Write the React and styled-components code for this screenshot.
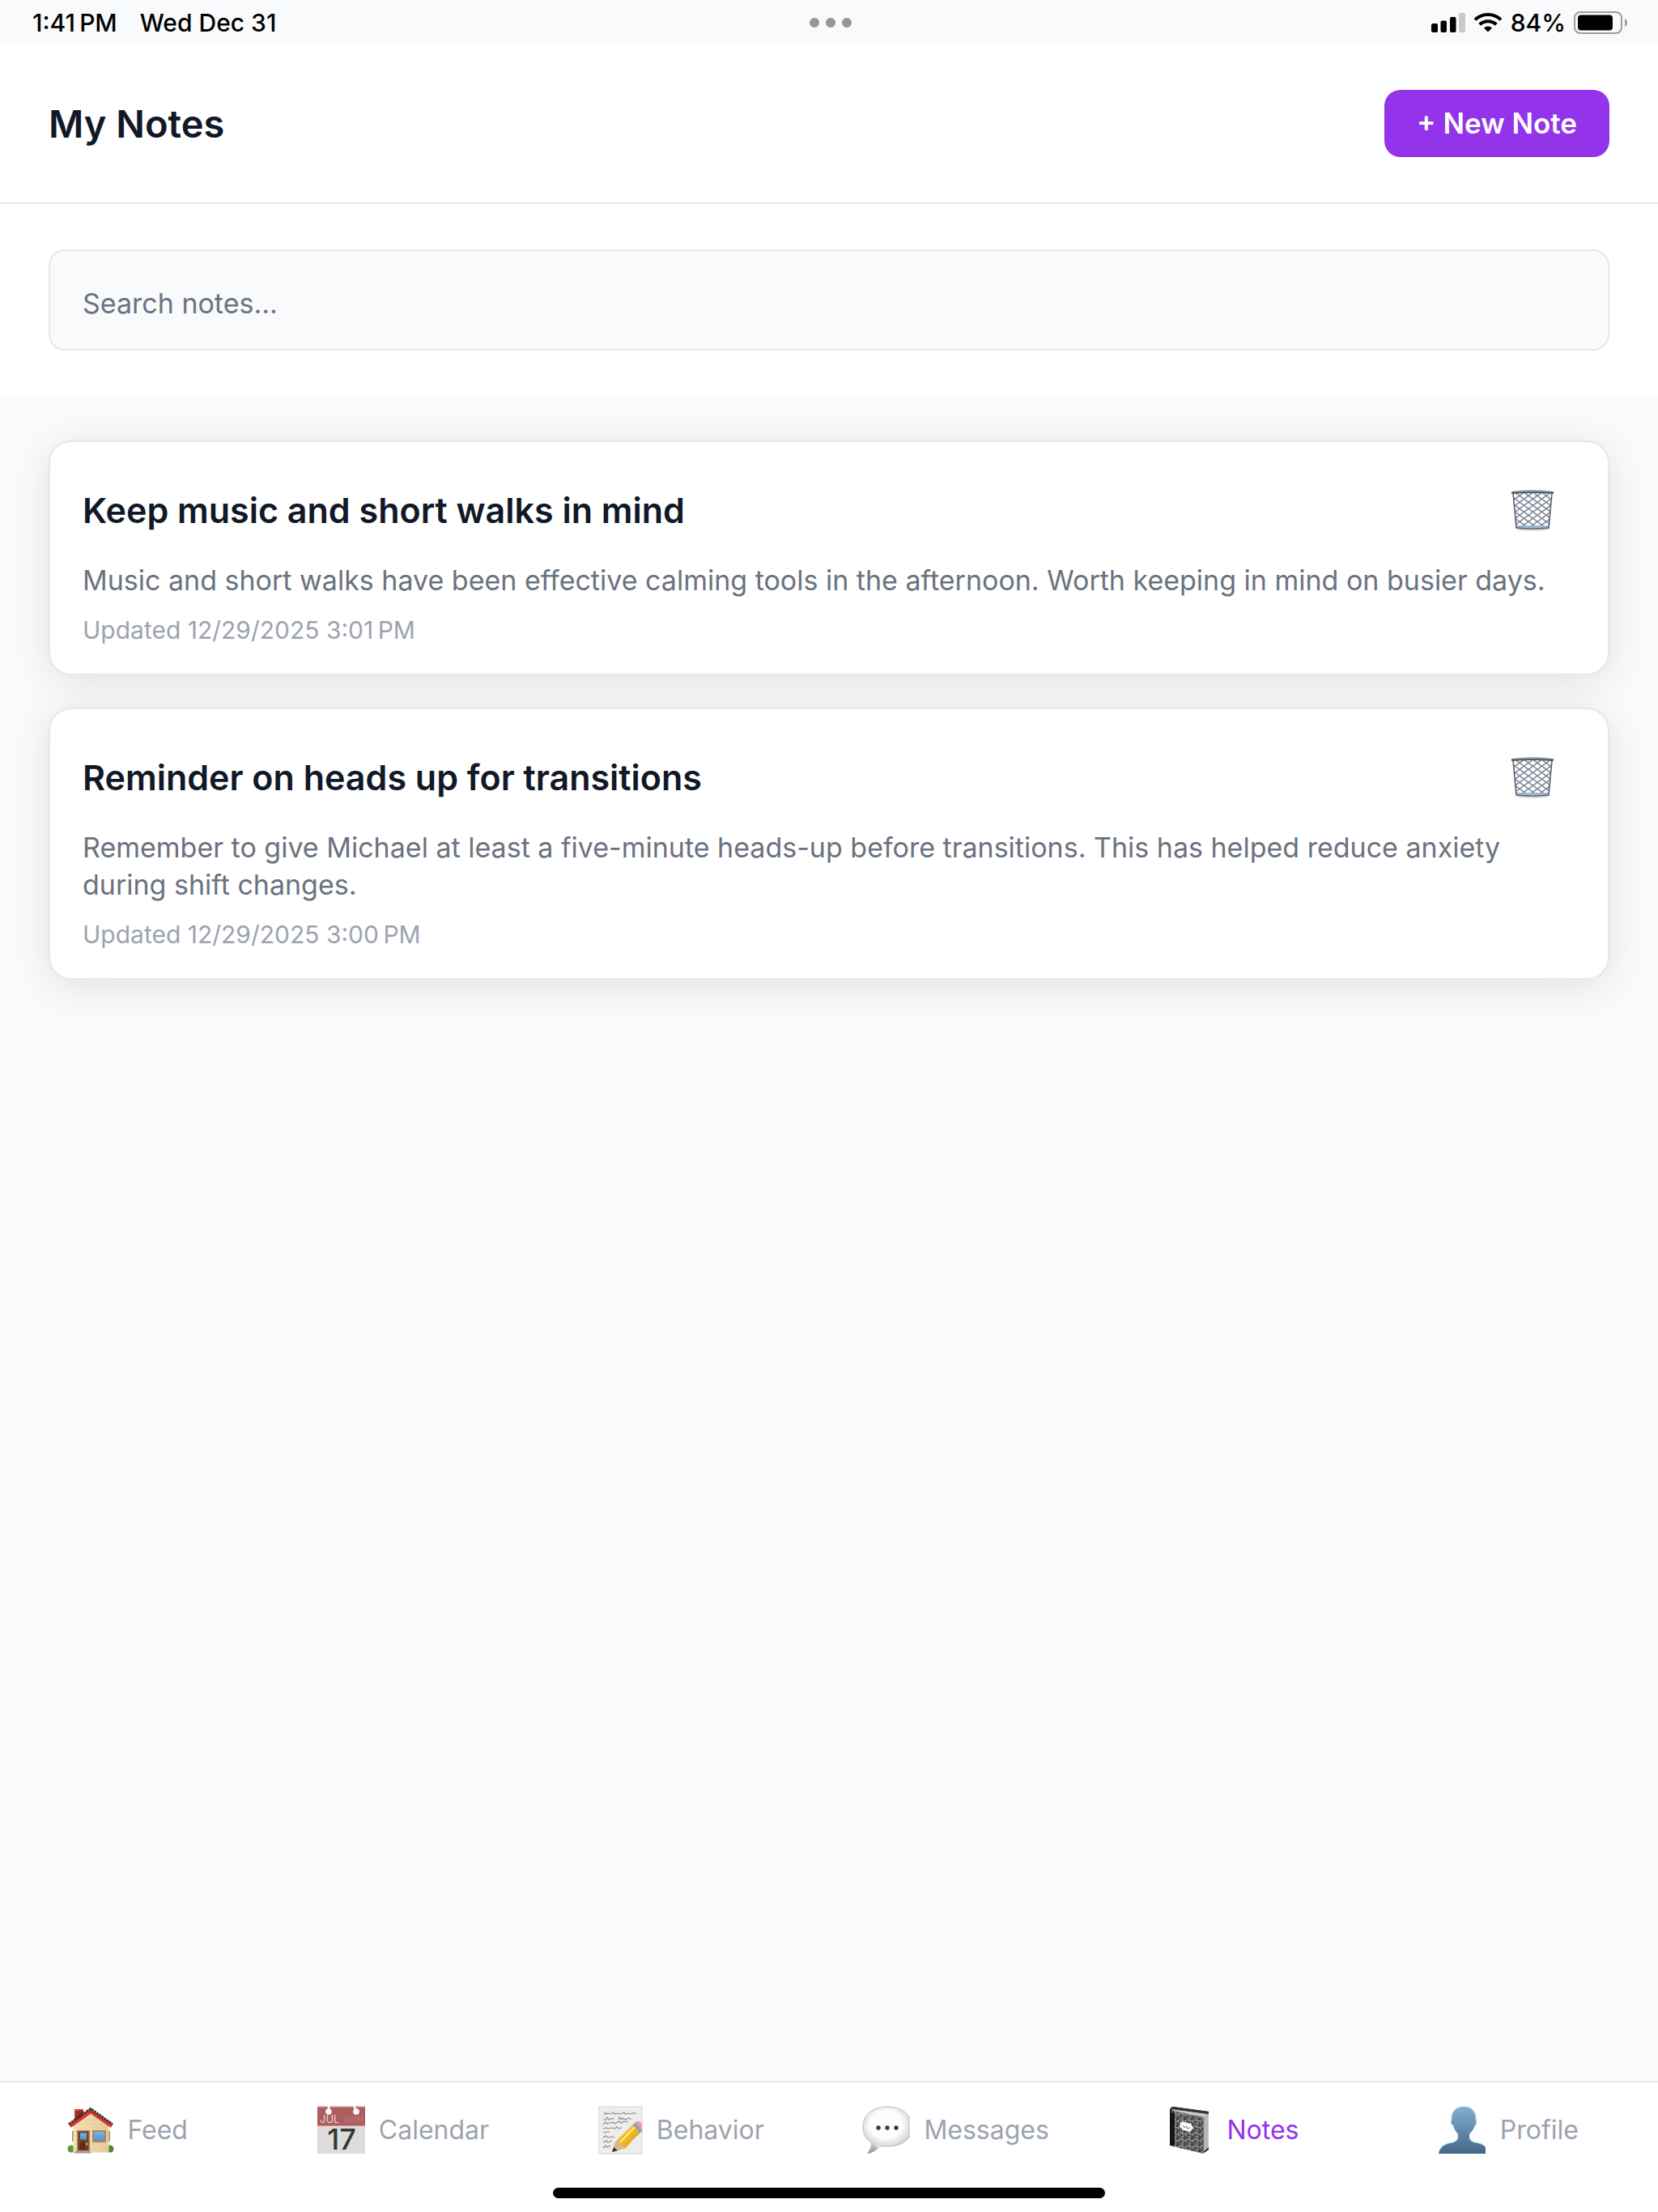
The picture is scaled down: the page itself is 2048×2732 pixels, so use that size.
import React from 'react';
import styled, { createGlobalStyle } from 'styled-components';

const GlobalStyle = createGlobalStyle`
  * {
    box-sizing: border-box;
  }

  body {
    margin: 0;
    background-color: #f9fafb;
    font-family: Inter, 'Liberation Sans', sans-serif;
    color: #111827;
  }

  svg {
    flex-shrink: 0;
    overflow: visible;
  }
`;

const Screen = styled.div`
  display: flex;
  flex-direction: column;
  min-height: 100vh;
`;

const StatusBar = styled.div`
  display: grid;
  grid-template-columns: 1fr auto 1fr;
  align-items: center;
  height: 55px;
  padding: 0 37px 0 40px;
  color: #000000;
  font-size: 30px;
  font-weight: 500;
`;

const StatusGroup = styled.div`
  display: flex;
  align-items: center;
  justify-content: ${({ $end }) => ($end ? 'flex-end' : 'flex-start')};
  gap: ${({ $end }) => ($end ? '10px' : '28px')};
`;

const Dots = styled.div`
  display: flex;
  gap: 8px;
`;

const Dot = styled.span`
  width: 12px;
  height: 12px;
  border-radius: 50%;
  background-color: #959698;
`;

const Header = styled.header`
  display: flex;
  justify-content: space-between;
  align-items: center;
  padding: 56px 60px;
  border-bottom: 2px solid #e5e7eb;
  background-color: #ffffff;
`;

const Title = styled.h1`
  margin: 0;
  font-size: 47px;
  font-weight: 600;
  line-height: 58px;
`;

const NewNoteButton = styled.button`
  padding: 20px 40px;
  border: none;
  border-radius: 20px;
  background-color: #9333ea;
  color: #ffffff;
  font-family: inherit;
  font-size: 35px;
  font-weight: 600;
  line-height: 43px;
`;

const SearchSection = styled.div`
  display: flex;
  padding: 56px 60px;
  background-color: #ffffff;
`;

const SearchInput = styled.input`
  flex: 1;
  height: 125px;
  padding: 7px 40px 0;
  border: 2px solid #e5e7eb;
  border-radius: 20px;
  background-color: #f9fafb;
  color: #111827;
  font-family: inherit;
  font-size: 34px;

  &::placeholder {
    color: #6b7280;
    opacity: 1;
  }
`;

const NoteList = styled.main`
  flex: 1;
  display: flex;
  flex-direction: column;
  gap: 40px;
  padding: 55px 60px;
`;

const NoteCard = styled.article`
  padding: 44px 40px 32px;
  border: 2px solid #e5e7eb;
  border-radius: 28px;
  background-color: #ffffff;
  box-shadow: 0 8px 48px rgba(0, 0, 0, 0.1);
`;

const NoteHeader = styled.div`
  display: flex;
  justify-content: space-between;
  align-items: center;
  margin-bottom: 24px;
  padding-right: 26px;
`;

const NoteTitle = styled.h2`
  margin: 0;
  font-size: 43px;
  font-weight: 600;
  line-height: 80px;
`;

const DeleteButton = styled.button`
  display: flex;
  padding: 0;
  border: none;
  background: none;
`;

const NoteBody = styled.p`
  margin: 0 0 16px;
  color: #6b7280;
  font-size: 34px;
  line-height: 46px;
`;

const NoteDate = styled.p`
  margin: 0;
  color: #9ca3af;
  font-size: 30px;
  line-height: 44px;
`;

const TabBar = styled.nav`
  border-top: 2px solid #e5e7eb;
  background-color: #ffffff;
`;

const TabList = styled.div`
  display: flex;
  padding: 28px 0 40px;
`;

const Tab = styled.a`
  flex: 1 1 0;
  display: flex;
  justify-content: center;
  align-items: center;
  gap: 16px;
  padding-right: 28px;
  color: ${({ $active }) => ($active ? '#9333ea' : '#9ca3af')};
  font-size: 32px;
  line-height: 62px;
  text-decoration: none;
`;

const HomeIndicator = styled.div`
  width: 33.3%;
  height: 13px;
  margin: 0 auto 17px;
  border-radius: 7px;
  background-color: #000000;
`;

const SignalIcon = () => (
  <svg width="42" height="24" viewBox="0 0 42 24">
    <rect x="0" y="13" width="8" height="11" rx="2" />
    <rect x="11.500" y="9.500" width="7.500" height="14.500" rx="2" />
    <rect x="23" y="5" width="7.500" height="19" rx="2" />
    <rect x="34" y="0" width="8" height="24" rx="2" fill="#c8c9ca" />
  </svg>
);

const WifiIcon = () => (
  <svg width="36" height="24" viewBox="0 0 36 24">
    <path d="M2 8.400a23 23 0 0 1 32 0" fill="none" stroke="#000" strokeWidth="4" />
    <path d="M7.700 14.300a15 15 0 0 1 20.600 0" fill="none" stroke="#000" strokeWidth="4" />
    <path d="M18 23.500l-5-5a7.300 7.300 0 0 1 10 0z" />
  </svg>
);

const BatteryIcon = () => (
  <svg width="67" height="28" viewBox="0 0 67 28">
    <rect x="1" y="1" width="58" height="26" rx="7" fill="none" stroke="#9b9c9d" strokeWidth="2" />
    <rect x="5" y="4.500" width="43" height="19" rx="4" />
    <path d="M63 9c4 1.500 4 8.500 0 10z" fill="#9b9c9d" />
  </svg>
);

const TrashIcon = () => (
  <svg width="54" height="52" viewBox="0 0 54 52">
    <defs>
      <clipPath id="basket">
        <path d="M3 5h48l-4 44H7z" />
      </clipPath>
      <pattern id="mesh" width="11" height="8" patternUnits="userSpaceOnUse">
        <path d="M0 1l11 8M11 1L0 9M0 -7l11 8M11 -7L0 1" stroke="#b4cbe2" strokeWidth="1.200" />
        <path d="M0 0l11 8M11 0L0 8" stroke="#7c7f85" strokeWidth="1.100" />
      </pattern>
    </defs>
    <ellipse cx="27" cy="50" rx="20" ry="1.800" fill="#d9dde1" />
    <g clipPath="url(#basket)">
      <rect width="54" height="52" fill="#ffffff" />
      <rect width="54" height="52" fill="url(#mesh)" />
      <rect y="45" width="54" height="3" fill="#9db8d3" />
    </g>
    <path d="M3 5l4 43q20 2 40 0l4-43" fill="none" stroke="#5d5f64" strokeWidth="1.600" />
    <path d="M1 3q26-4 52 0l-1 2H2z" fill="#9fbfdc" />
    <path d="M1 3.500q26-3 52 0" fill="none" stroke="#7d93a8" />
    <path d="M1 4.800q26-1.500 52 0" fill="none" stroke="#504b4a" strokeWidth="1.800" />
  </svg>
);

const HouseIcon = () => (
  <svg width="60" height="62" viewBox="0 0 60 62">
    <defs>
      <linearGradient id="wall" x1="0" x2="1">
        <stop offset="0" stopColor="#f8e2b4" />
        <stop offset="1" stopColor="#e3cb9e" />
      </linearGradient>
      <linearGradient id="pane" x1="0" y1="0" x2="0" y2="1">
        <stop offset="0" stopColor="#76b5e2" />
        <stop offset="1" stopColor="#4b94cb" />
      </linearGradient>
      <linearGradient id="chimney" x1="0" x2="1">
        <stop offset="0" stopColor="#c3332c" />
        <stop offset="1" stopColor="#7d1d1a" />
      </linearGradient>
    </defs>
    <path d="M11 5h11v16H11z" fill="url(#chimney)" />
    <path d="M11 5h11v2H11z" fill="#d0443a" />
    <circle cx="7" cy="54" r="4.500" fill="#5c9a2c" />
    <circle cx="55" cy="54" r="4.500" fill="#4f8825" />
    <path d="M8 32h2v13H8zM53 32h2v13h-2z" fill="#a58f78" />
    <path d="M9.500 25L31 7l22.500 18v33.500h-44z" fill="url(#wall)" />
    <path d="M20 18h22M14 23h34M10 28h43M10 33h43M10 38h43M10 43h43M10 48h43M10 53h43" stroke="#e3c995" strokeWidth="0.700" />
    <path d="M5.500 26L31 8l26 18" fill="none" stroke="#d6352c" strokeWidth="4.500" />
    <path d="M4 23.500L31 4.500l27 19" fill="none" stroke="#322c2c" strokeWidth="2.800" strokeDasharray="3 0.800" />
    <path d="M14 31h16v26H14z" fill="#a58a64" />
    <path d="M15.500 32.500h13V57h-13z" fill="#783c25" />
    <path d="M18 46h6v9h-6z" fill="#602b1b" />
    <path d="M18 34.500h8v8h-8z" fill="url(#pane)" />
    <circle cx="26" cy="48" r="1.400" fill="#f3b52e" />
    <path d="M33 31h17v15H33z" fill="#a98562" />
    <path d="M35.500 33h12v11h-12z" fill="url(#pane)" />
    <path d="M10 59.500l3-3.500h16l3 3.500z" fill="#a79a91" />
  </svg>
);

const CalendarIcon = () => (
  <svg width="60" height="62" viewBox="0 0 60 62">
    <rect x="0" y="2" width="59" height="58" fill="#dcdcdc" />
    <rect x="0" y="2" width="59" height="23" fill="#ab5e5e" />
    <path d="M0 2h59" stroke="#d2a5a5" strokeWidth="1.500" />
    <path d="M0 25.500h59" stroke="#d28d8d" />
    <path d="M14 1v6M45 1l3 6" stroke="#fff" strokeWidth="2.500" />
    <circle cx="14" cy="8" r="3.800" fill="#fff" />
    <circle cx="48" cy="8" r="3.800" fill="#fff" />
    <path d="M35 15v7M39 14v8M43 13.500v8M47 13v8M51 12.500v8M55 12v8" stroke="#bd8181" strokeWidth="1.200" />
    <text x="3" y="22" fill="#ecd4d4" fontSize="13">JUL</text>
    <text x="30" y="55" textAnchor="middle" fill="#333636" fontSize="36" fontWeight="500">17</text>
  </svg>
);

const MemoIcon = () => (
  <svg width="60" height="62" viewBox="-3 0 60 62">
    <defs>
      <linearGradient id="pencil" x1="0" y1="0" x2="1" y2="1">
        <stop offset="0" stopColor="#ffd83d" />
        <stop offset="1" stopColor="#dc9808" />
      </linearGradient>
    </defs>
    <rect x="2" y="2" width="53" height="58" fill="#ededed" stroke="#d4d4d4" />
    <path
      d="M8 12l2-3 1 2 3-1 2 1 4-2 1 2 3-1 3 1 4-1 2-1 1 2 4-1 2 1 3-1 5 0M7 18l4 0 1-3 2 3 5-2 1 2M26 18l1-3 3 3 1-2 4 2 3-2 4 1M7 24l3-3 2 2 3-1 4-1 2 2 4-2 1-1 3 2 4-2 5 1M7 29l4-1 2 1 5-1 3 1 3-2 2 2 4-1M7 34l5-1 3 0M7 40l3-2 3 2 5-1 3 1M7 46l4-2 2 2 5-2M7 53l3-3 2 2 4-2"
      fill="none"
      stroke="#8a8a8c"
      strokeWidth="1.100"
    />
    <path d="M22 57L55 25v7L34 52z" fill="#000" opacity="0.350" />
    <path d="M23 44l22-21 8 9-18 21-11 3-4-1z" fill="url(#pencil)" />
    <path d="M27 47l21-22" stroke="#fff08d" strokeWidth="2" />
    <path d="M21 47l4-4q5 2 7 10l-10 4-3-2z" fill="#dcb981" />
    <path d="M20 52l5 4-7 2z" fill="#38302d" />
    <path d="M43 25l4-4 8 9-4 4q-2-6-8-9z" fill="#8b9fb6" />
    <path d="M46 22q3-3 6-2l3 3v6l-2 2q-1-6-7-9z" fill="#ef9ca2" />
  </svg>
);

const BubbleIcon = () => (
  <svg width="60" height="62" viewBox="0 0 60 62">
    <defs>
      <radialGradient id="bubble" cx="0.500" cy="0.450" r="0.580">
        <stop offset="0.600" stopColor="#fdfdfd" />
        <stop offset="1" stopColor="#d2d2d2" />
      </radialGradient>
      <linearGradient id="tail" x1="0" y1="0" x2="0" y2="1">
        <stop offset="0" stopColor="#e8e8e8" />
        <stop offset="1" stopColor="#929292" />
      </linearGradient>
    </defs>
    <path d="M10 42q3 9-4 18 13-2 17-12z" fill="url(#tail)" />
    <path
      d="M58 14C51 5 42 2 31 2 13 2 1 12 1 27c0 9 4 16 11 20 5 3 10 4 19 4 12 0 20-3 27-11z"
      fill="url(#bubble)"
      stroke="#bdbdbd"
    />
    <path d="M10 45q5 4 13 5-2 3-4 4-2-4-9-9z" fill="#dddddd" />
    <circle cx="20" cy="28" r="2.700" fill="#3b3b3b" />
    <circle cx="31" cy="28" r="2.700" fill="#3b3b3b" />
    <circle cx="42" cy="28" r="2.700" fill="#3b3b3b" />
  </svg>
);

const NotebookIcon = () => (
  <svg width="60" height="62" viewBox="0 0 60 62">
    <defs>
      <pattern id="marble" width="9" height="8" patternUnits="userSpaceOnUse">
        <rect width="9" height="8" fill="#585858" />
        <path d="M0 1l2 2-1 3M4 0l-1 3 3 1M7 2l1 3-2 2M2 7l3-1" stroke="#b0b0b0" strokeWidth="1" fill="none" />
        <path d="M5 2l3-1M1 4l2 2M6 6l2 1" stroke="#222" strokeWidth="1.200" />
      </pattern>
    </defs>
    <path d="M6 6l4-4 44 6v47l-7 5z" fill="#272727" />
    <path d="M9 5l45 6v41l-7 6V15L8 8z" fill="#c9c9c9" />
    <path d="M50 12v43M52 11v42" stroke="#999" strokeWidth="0.800" />
    <path d="M6 6l42 9v45L6 50z" fill="url(#marble)" />
    <path d="M6 6l6 2v43l-6-2z" fill="#141414" />
    <path d="M6 6q1-4 4-4l44 6v3L11 5z" fill="#333" />
    <path d="M7 8l41 8" stroke="#858585" />
    <path d="M48 15v44" stroke="#8f8f8f" />
    <path d="M19 22q2-3 5-1l8 2q2 3 3 5-2 3-4 5l-8-2q-3-2-5-4z" fill="#fafafa" />
    <path d="M22 25l2 3 2-2 2 3 3-1" fill="none" stroke="#777" />
  </svg>
);

const ProfileIcon = () => (
  <svg width="60" height="62" viewBox="0 0 60 62">
    <defs>
      <linearGradient id="bust" x1="0" y1="0" x2="0" y2="1">
        <stop offset="0" stopColor="#82afd0" />
        <stop offset="1" stopColor="#456688" />
      </linearGradient>
    </defs>
    <path
      d="M0 60C2 49 9 48 18 46q6-2 6-6v-4q-5-6-6-11c-3-1-3-5-2-7C16 7 22 2 31 2s15 5 15 16c1 2 1 6-1 7q-2 6-7 11v4q0 4 6 6c6 1 11 2 14 6v8z"
      fill="url(#bust)"
    />
    <path d="M1 56q3-8 17-10 6-2 6-6M16 18C16 7 22 2 31 2s15 5 15 16M38 40q0 4 6 6c6 1 11 2 14 6" fill="none" stroke="#90d2e0" />
  </svg>
);

const notes = [
  {
    title: 'Keep music and short walks in mind',
    body: 'Music and short walks have been effective calming tools in the afternoon. Worth keeping in mind on busier days.',
    updated: '12/29/2025 3:01\u202fPM',
  },
  {
    title: 'Reminder on heads up for transitions',
    body: 'Remember to give Michael at least a five-minute heads-up before transitions. This has helped reduce anxiety during shift changes.',
    updated: '12/29/2025 3:00\u202fPM',
  },
];

const tabs = [
  { label: 'Feed', Icon: HouseIcon },
  { label: 'Calendar', Icon: CalendarIcon },
  { label: 'Behavior', Icon: MemoIcon },
  { label: 'Messages', Icon: BubbleIcon },
  { label: 'Notes', Icon: NotebookIcon, active: true },
  { label: 'Profile', Icon: ProfileIcon },
];

const Note = ({ title, body, updated }) => (
  <NoteCard>
    <NoteHeader>
      <NoteTitle>{title}</NoteTitle>
      <DeleteButton type="button" aria-label="Delete note">
        <TrashIcon />
      </DeleteButton>
    </NoteHeader>
    <NoteBody>{body}</NoteBody>
    <NoteDate>Updated {updated}</NoteDate>
  </NoteCard>
);

const App = () => (
  <Screen>
    <GlobalStyle />
    <StatusBar>
      <StatusGroup>
        <span>1:41{'\u202f'}PM</span>
        <span>Wed Dec 31</span>
      </StatusGroup>
      <Dots>
        <Dot />
        <Dot />
        <Dot />
      </Dots>
      <StatusGroup $end>
        <SignalIcon />
        <WifiIcon />
        <span>84%</span>
        <BatteryIcon />
      </StatusGroup>
    </StatusBar>
    <Header>
      <Title>My Notes</Title>
      <NewNoteButton type="button">+ New Note</NewNoteButton>
    </Header>
    <SearchSection>
      <SearchInput type="search" aria-label="Search notes" placeholder="Search notes..." />
    </SearchSection>
    <NoteList>
      {notes.map(note => (
        <Note key={note.title} {...note} />
      ))}
    </NoteList>
    <TabBar>
      <TabList>
        {tabs.map(({ label, Icon, active }) => (
          <Tab key={label} href="#" $active={active}>
            <Icon />
            {label}
          </Tab>
        ))}
      </TabList>
      <HomeIndicator />
    </TabBar>
  </Screen>
);

export default App;
